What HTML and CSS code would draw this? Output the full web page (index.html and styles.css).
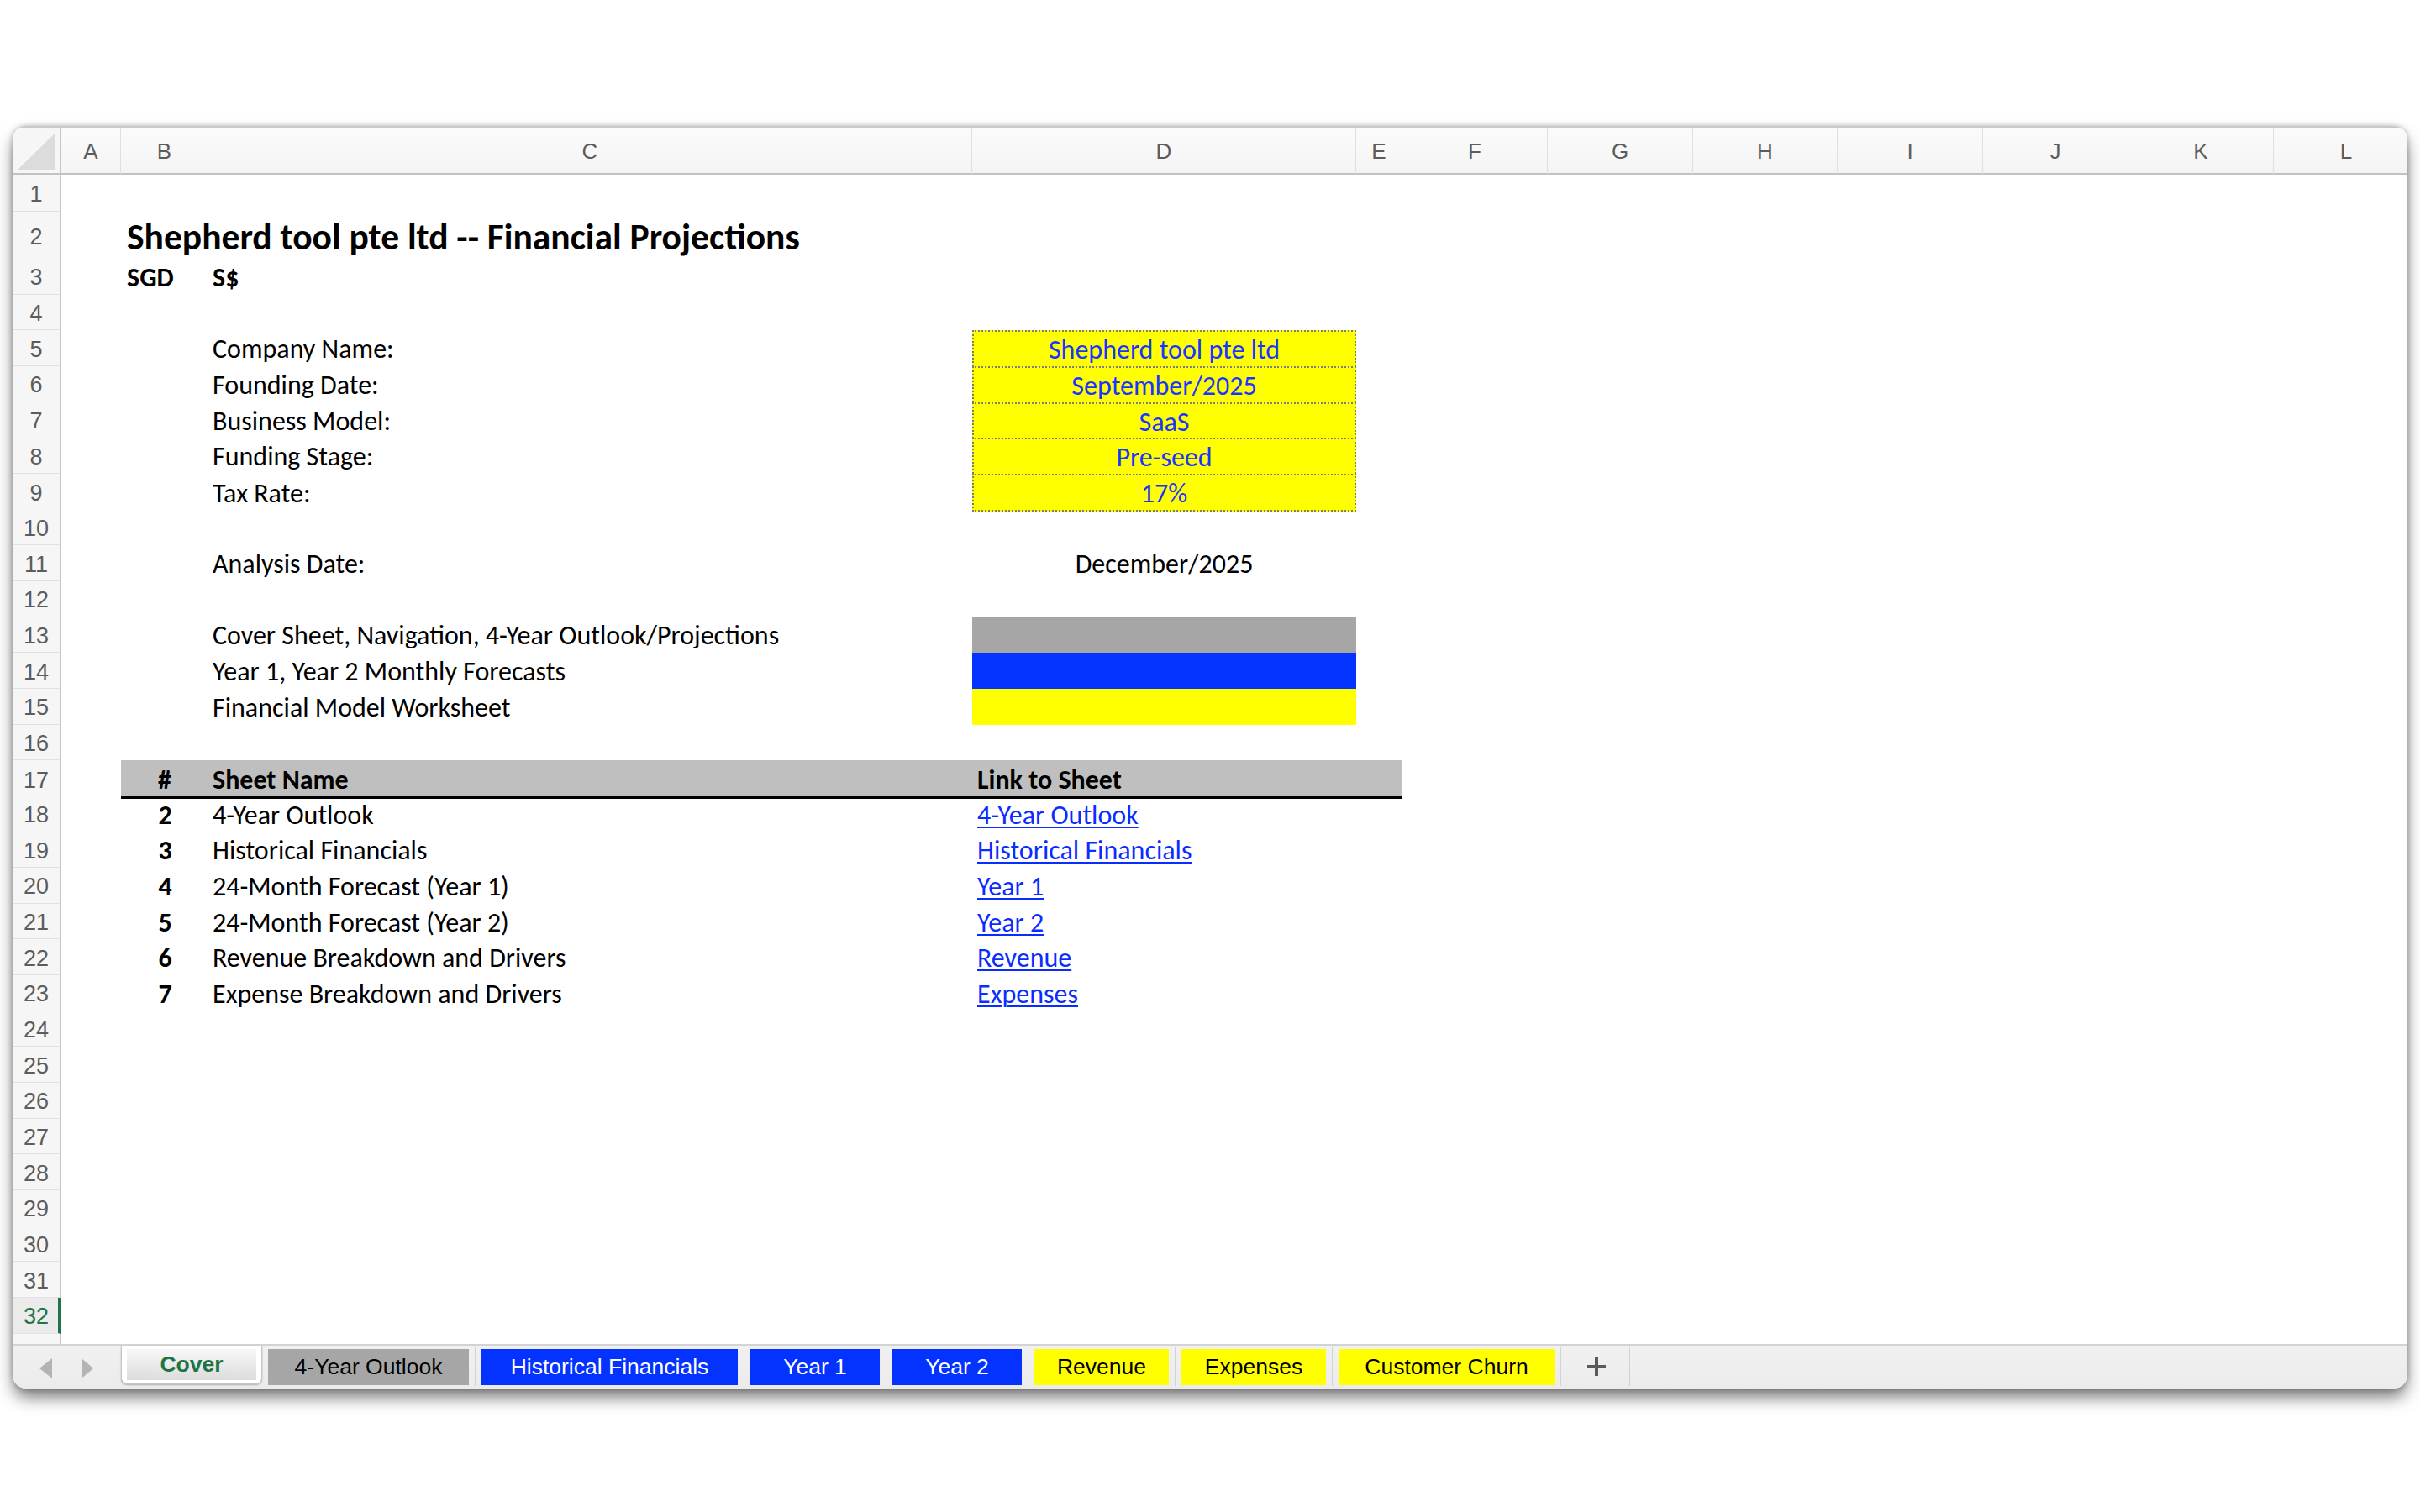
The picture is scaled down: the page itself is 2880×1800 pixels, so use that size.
FILE: index.html
```html
<!DOCTYPE html>
<html>
<head>
<meta charset="utf-8">
<title>Shepherd tool pte ltd -- Financial Projections</title>
<link rel="stylesheet" href="styles.css">
</head>
<body>
<div class="window">
  <div class="sheet">
    <div class="grow colhdr">
      <div class="corner"><span class="corner-tri"></span></div>
      <div class="ch">A</div><div class="ch">B</div><div class="ch">C</div><div class="ch">D</div><div class="ch">E</div><div class="ch">F</div><div class="ch">G</div><div class="ch">H</div><div class="ch">I</div><div class="ch">J</div><div class="ch">K</div><div class="ch">L</div>
    </div>

    <div class="grow r1"><div class="rh">1</div></div>
    <div class="grow r2"><div class="rh">2</div><div class="cell cB title">Shepherd tool pte ltd -- Financial Projections</div></div>
    <div class="grow r"><div class="rh">3</div><div class="cell cB bold">SGD</div><div class="cell cC bold">S$</div></div>
    <div class="grow r"><div class="rh">4</div></div>
    <div class="grow r"><div class="rh">5</div><div class="cell cC">Company Name:</div><div class="cell cD inp">Shepherd tool pte ltd</div></div>
    <div class="grow r"><div class="rh">6</div><div class="cell cC">Founding Date:</div><div class="cell cD inp">September/2025</div></div>
    <div class="grow r"><div class="rh">7</div><div class="cell cC">Business Model:</div><div class="cell cD inp">SaaS</div></div>
    <div class="grow r"><div class="rh">8</div><div class="cell cC">Funding Stage:</div><div class="cell cD inp">Pre-seed</div></div>
    <div class="grow r"><div class="rh">9</div><div class="cell cC">Tax Rate:</div><div class="cell cD inp inp-last">17%</div></div>
    <div class="grow r"><div class="rh">10</div></div>
    <div class="grow r"><div class="rh">11</div><div class="cell cC">Analysis Date:</div><div class="cell cD center">December/2025</div></div>
    <div class="grow r"><div class="rh">12</div></div>
    <div class="grow r"><div class="rh">13</div><div class="cell cC">Cover Sheet, Navigation, 4-Year Outlook/Projections</div><div class="cell cD bar-gray"></div></div>
    <div class="grow r"><div class="rh">14</div><div class="cell cC">Year 1, Year 2 Monthly Forecasts</div><div class="cell cD bar-blue"></div></div>
    <div class="grow r"><div class="rh">15</div><div class="cell cC">Financial Model Worksheet</div><div class="cell cD bar-yellow"></div></div>
    <div class="grow r"><div class="rh">16</div></div>
    <div class="grow r"><div class="rh">17</div><div class="cell cB th center">#</div><div class="cell cC th">Sheet Name</div><div class="cell cD th">Link to Sheet</div><div class="cell cE th"></div></div>
    <div class="grow r"><div class="rh">18</div><div class="cell cB bold center">2</div><div class="cell cC">4-Year Outlook</div><div class="cell cD"><a class="link" href="#">4-Year Outlook</a></div></div>
    <div class="grow r"><div class="rh">19</div><div class="cell cB bold center">3</div><div class="cell cC">Historical Financials</div><div class="cell cD"><a class="link" href="#">Historical Financials</a></div></div>
    <div class="grow r"><div class="rh">20</div><div class="cell cB bold center">4</div><div class="cell cC">24-Month Forecast (Year 1)</div><div class="cell cD"><a class="link" href="#">Year 1</a></div></div>
    <div class="grow r"><div class="rh">21</div><div class="cell cB bold center">5</div><div class="cell cC">24-Month Forecast (Year 2)</div><div class="cell cD"><a class="link" href="#">Year 2</a></div></div>
    <div class="grow r"><div class="rh">22</div><div class="cell cB bold center">6</div><div class="cell cC">Revenue Breakdown and Drivers</div><div class="cell cD"><a class="link" href="#">Revenue</a></div></div>
    <div class="grow r"><div class="rh">23</div><div class="cell cB bold center">7</div><div class="cell cC">Expense Breakdown and Drivers</div><div class="cell cD"><a class="link" href="#">Expenses</a></div></div>
    <div class="grow r"><div class="rh">24</div></div>
    <div class="grow r"><div class="rh">25</div></div>
    <div class="grow r"><div class="rh">26</div></div>
    <div class="grow r"><div class="rh">27</div></div>
    <div class="grow r"><div class="rh">28</div></div>
    <div class="grow r"><div class="rh">29</div></div>
    <div class="grow r"><div class="rh">30</div></div>
    <div class="grow r"><div class="rh">31</div></div>
    <div class="grow r"><div class="rh rh-sel">32</div></div>
    <div class="grow rfill"><div class="rh rh-fill"></div></div>
  </div>

  <div class="tabbar">
    <div class="nav">
      <span class="arrow arrow-left"></span>
      <span class="arrow arrow-right"></span>
    </div>
    <div class="tab-active"><div class="tab-inner">Cover</div></div>
    <div class="tab tab-gray w-outlook">4-Year Outlook</div><span class="sep"></span>
    <div class="tab tab-blue w-hist">Historical Financials</div><span class="sep"></span>
    <div class="tab tab-blue w-year">Year 1</div><span class="sep"></span>
    <div class="tab tab-blue w-year">Year 2</div><span class="sep"></span>
    <div class="tab tab-yellow w-rev">Revenue</div><span class="sep"></span>
    <div class="tab tab-yellow w-exp">Expenses</div><span class="sep"></span>
    <div class="tab tab-yellow w-churn">Customer Churn</div><span class="sep"></span>
    <div class="add"><span class="plus"></span></div><span class="sep"></span>
  </div>
</div>
</body>
</html>
```
FILE: styles.css
```css
* { box-sizing: border-box; }
html, body { margin: 0; padding: 0; background: #ffffff; }
body {
  width: 2880px;
  height: 1800px;
  overflow: hidden;
  font-family: Carlito, Calibri, Lato, "Open Sans", sans-serif;
  color: #000;
}

.window {
  margin: 150px 0 0 15px;
  width: 2850px;
  height: 1503px;
  border-radius: 16px;
  overflow: hidden;
  background: #fff;
  display: flex;
  flex-direction: column;
  box-shadow: 0 12px 20px -2px rgba(0,0,0,0.55), 0 0 6px rgba(0,0,0,0.28);
}

.sheet { display: flex; flex-direction: column; }

.grow {
  display: grid;
  grid-template-columns: 58px 71px 104px 909px 457px 55px 173px 173px 172px 173px 173px 173px 173px;
  width: 2864px;
}
.colhdr { height: 58px; border-top: 2px solid #c9c9c9; }
.r1 { height: 44px; }
.r2 { height: 56px; }
.r { height: 42.667px; }
.rfill { height: 12px; }

.corner {
  background: #f6f6f6;
  border-right: 2px solid #c6c6c6;
  border-bottom: 2px solid #c2c2c2;
  position: relative;
}
.corner-tri {
  position: absolute;
  right: 5px;
  bottom: 4px;
  width: 0;
  height: 0;
  border-left: 45px solid transparent;
  border-bottom: 44px solid #dcdcdc;
}
.ch {
  background: linear-gradient(#fbfbfb, #f4f4f4);
  border-bottom: 2px solid #c2c2c2;
  border-right: 1px solid #e0e0e0;
  display: flex;
  align-items: center;
  justify-content: center;
  padding-top: 2px;
  font-family: "Liberation Sans", Arial, sans-serif;
  font-size: 26px;
  color: #5c5c5c;
}

.rh {
  grid-column: 1;
  background: #f6f6f6;
  border-right: 2px solid #c6c6c6;
  border-bottom: 1px solid #e2e2e2;
  display: flex;
  align-items: center;
  justify-content: center;
  padding-top: 4px;
  font-family: "Liberation Sans", Arial, sans-serif;
  font-size: 27px;
  color: #5c5c5c;
}
.rh-sel {
  background: #ebebeb;
  color: #217346;
  border-right: 4px solid #217346;
  padding-left: 2px;
}
.rh-fill { border-bottom: none; }

.cell {
  display: flex;
  align-items: center;
  padding: 2px 6px 0 6px;
  white-space: nowrap;
  font-size: 32px;
  min-width: 0;
  overflow: visible;
}
.cB { grid-column: 3; padding-left: 7px; }
.cC { grid-column: 4; padding-left: 5px; }
.cD { grid-column: 5; }
.cE { grid-column: 6; }

.title { font-size: 43.5px; font-weight: 700; padding-top: 4px; }
.bold { font-weight: 700; }
.center { justify-content: center; }

.inp {
  background: #ffff00;
  color: #1836ff;
  justify-content: center;
  border: 2px dotted #7c7c7c;
  border-bottom: none;
}
.inp-last { border-bottom: 2px dotted #7c7c7c; }

.bar-gray { background: #a6a6a6; }
.bar-blue { background: #0433ff; }
.bar-yellow { background: #ffff00; }

.th {
  background: #bfbfbf;
  font-weight: 700;
  border-bottom: 3px solid #000;
  padding-top: 4px;
}
.th.cB { padding-left: 6px; }

.link {
  color: #0b2cff;
  text-decoration: underline;
  text-decoration-thickness: 2px;
  text-underline-offset: 3px;
}

/* tab bar */
.tabbar {
  height: 53px;
  background: linear-gradient(#f1f1f1, #ebebeb);
  border-top: 2px solid #d3d3d3;
  display: flex;
  align-items: flex-start;
  font-family: "Liberation Sans", Arial, sans-serif;
  font-size: 26.5px;
}
.nav {
  width: 129px;
  height: 51px;
  position: relative;
}
.arrow {
  position: absolute;
  top: 15px;
  width: 0;
  height: 0;
  border-top: 12px solid transparent;
  border-bottom: 12px solid transparent;
}
.arrow-left { left: 32px; border-right: 15px solid #b3b3b3; }
.arrow-right { left: 82px; border-left: 14px solid #b3b3b3; }

.tab-active {
  width: 168px;
  height: 46px;
  background: #fff;
  border: 1px solid #c4c4c4;
  border-top: none;
  border-radius: 0 0 7px 7px;
  box-shadow: 0 1px 2px rgba(0,0,0,0.25);
  padding: 4px 6px 0 6px;
}
.tab-inner {
  height: 37px;
  background: linear-gradient(#f8f8f8, #dcdcdc);
  display: flex;
  align-items: center;
  justify-content: center;
  color: #217346;
  font-weight: 700;
}

.tab {
  height: 43px;
  margin: 4px 7px 0 7px;
  display: flex;
  align-items: center;
  justify-content: center;
  white-space: nowrap;
}
.tab-gray { background: #a6a6a6; color: #000; }
.tab-blue { background: #0433ff; color: #fff; }
.tab-yellow { background: #ffff00; color: #000; }
.w-outlook { width: 239px; }
.w-hist { width: 305px; }
.w-year { width: 154px; }
.w-rev { width: 160px; }
.w-exp { width: 172px; }
.w-churn { width: 257px; }

.sep {
  width: 1px;
  height: 47px;
  margin-top: 1px;
  background: #d2d2d2;
}

.add {
  width: 81px;
  height: 51px;
  position: relative;
}
.plus {
  position: absolute;
  left: 31px;
  top: 14px;
  width: 22px;
  height: 22px;
}
.plus::before, .plus::after {
  content: "";
  position: absolute;
  background: #5a5a5a;
}
.plus::before { left: 0; top: 9px; width: 22px; height: 4px; }
.plus::after { left: 9px; top: 0; width: 4px; height: 22px; }
```
